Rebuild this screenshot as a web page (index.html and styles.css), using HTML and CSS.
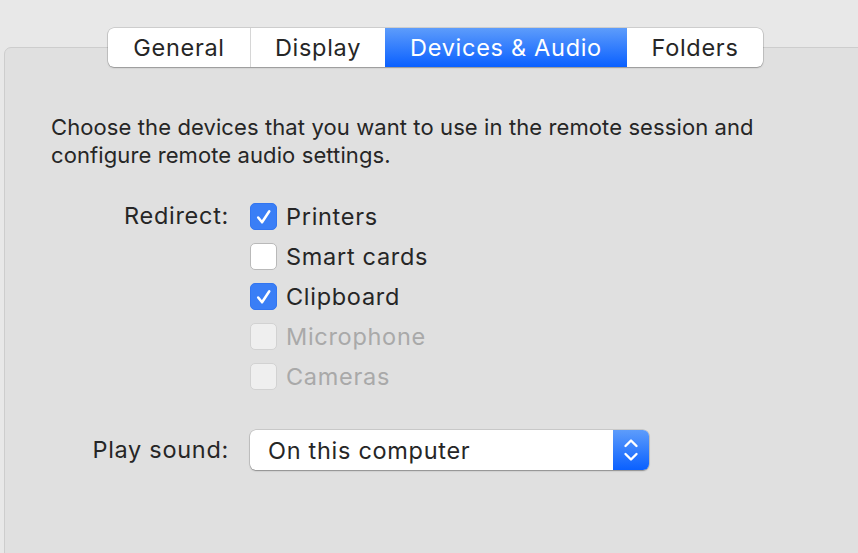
FILE: index.html
```html
<!DOCTYPE html>
<html>
<head>
<meta charset="utf-8">
<link rel="stylesheet" href="styles.css">
</head>
<body>
<div class="window">
  <div class="panel">
    <div class="tabs">
      <div class="tab t-general">General</div>
      <div class="tab t-display">Display</div>
      <div class="tab t-devices active">Devices &amp; Audio</div>
      <div class="tab t-folders">Folders</div>
    </div>
    <p class="desc">Choose the devices that you want to use in the remote session and configure remote audio settings.</p>
    <div class="form">
      <div class="label">Redirect:</div>
      <div class="checks">
        <div class="check"><span class="box on"><svg viewBox="0 0 28 28" width="28" height="28"><path d="M8.5 14.5 L12.5 19.5 L20 8" fill="none" stroke="#fff" stroke-width="2.6" stroke-linecap="round" stroke-linejoin="round"/></svg></span><span class="ctext">Printers</span></div>
        <div class="check"><span class="box"></span><span class="ctext">Smart cards</span></div>
        <div class="check"><span class="box on"><svg viewBox="0 0 28 28" width="28" height="28"><path d="M8.5 14.5 L12.5 19.5 L20 8" fill="none" stroke="#fff" stroke-width="2.6" stroke-linecap="round" stroke-linejoin="round"/></svg></span><span class="ctext">Clipboard</span></div>
        <div class="check disabled"><span class="box"></span><span class="ctext">Microphone</span></div>
        <div class="check disabled"><span class="box"></span><span class="ctext">Cameras</span></div>
      </div>
      <div class="label sound">Play sound:</div>
      <div class="select">
        <span class="sel-text">On this computer</span>
        <span class="sel-arrows"><svg viewBox="0 0 36 40" width="36" height="40"><path d="M12.5 16 L18 10.5 L23.5 16" fill="none" stroke="#fff" stroke-width="2.4" stroke-linecap="round" stroke-linejoin="round"/><path d="M12.5 24 L18 29.5 L23.5 24" fill="none" stroke="#fff" stroke-width="2.4" stroke-linecap="round" stroke-linejoin="round"/></svg></span>
      </div>
    </div>
  </div>
</div>
</body>
</html>
```
FILE: styles.css
```css
html, body {
  margin: 0;
  padding: 0;
  background: #e8e8e8;
  overflow: hidden;
  height: 553px;
}
body {
  font-family: "Inter", "Liberation Sans", sans-serif;
  color: #262626;
}
.window {
  padding-top: 47px;
  padding-left: 4px;
}
.panel {
  width: 870px;
  height: 520px;
  background: #e0e0e0;
  border: 1px solid #cdcdcd;
  border-radius: 7px;
  box-sizing: border-box;
}
.tabs {
  display: flex;
  margin-left: 103px;
  margin-top: -20px;
  width: max-content;
  height: 39px;
  border-radius: 6px;
  background: #fff;
  box-shadow: 0 0 0 0.5px rgba(0,0,0,0.22), 0 1px 1.5px rgba(0,0,0,0.25);
  overflow: hidden;
}
.tab {
  display: flex;
  align-items: center;
  justify-content: center;
  font-size: 23.5px;
  letter-spacing: 0.03em;
  color: #262626;
  box-sizing: border-box;
}
.t-general { width: 143px; border-right: 1px solid #d6d6d6; }
.t-display { width: 134px; }
.t-devices { width: 242px; }
.t-folders { width: 136px; }
.tab.active {
  background: linear-gradient(#5d9cfb, #0a60ff);
  color: #fff;
}
.desc {
  margin: 46px 0 0 46px;
  width: 740px;
  font-size: 22px;
  letter-spacing: 0.1px;
  line-height: 28px;
  color: #262626;
}
.form {
  display: grid;
  grid-template-columns: 224px auto;
  column-gap: 21px;
  margin-top: 32px;
  align-items: start;
}
.label {
  text-align: right;
  font-size: 23.5px;
  letter-spacing: 0.03em;
  line-height: 30px;
}
.checks {
  display: flex;
  flex-direction: column;
  gap: 10px;
}
.check {
  display: flex;
  align-items: center;
  gap: 9px;
  height: 30px;
  font-size: 23.5px;
  letter-spacing: 0.03em;
}
.box {
  width: 27px;
  height: 27px;
  box-sizing: border-box;
  border-radius: 5px;
  background: #fff;
  border: 1px solid #b9b9b9;
  display: flex;
}
.box.on {
  background: #3a7ef6;
  border-color: #3275f0;
}
.box svg { margin: -1px; }
.check.disabled .box {
  background: #efefef;
  border-color: #d2d2d2;
}
.check.disabled .ctext {
  color: #a9a9a9;
}
.label.sound {
  margin-top: 39px;
  line-height: 40px;
}
.select {
  margin-top: 39px;
  width: 399px;
  height: 40px;
  display: flex;
  align-items: center;
  background: #fff;
  border-radius: 6px;
  box-shadow: 0 0 0 0.5px rgba(0,0,0,0.2), 0 1px 1.5px rgba(0,0,0,0.3);
  overflow: hidden;
}
.sel-text {
  flex: 1;
  padding-left: 18px;
  font-size: 23.5px;
  letter-spacing: 0.03em;
}
.sel-arrows {
  width: 36px;
  height: 40px;
  background: linear-gradient(#5d9cfb, #0a60ff);
  display: flex;
}
```
